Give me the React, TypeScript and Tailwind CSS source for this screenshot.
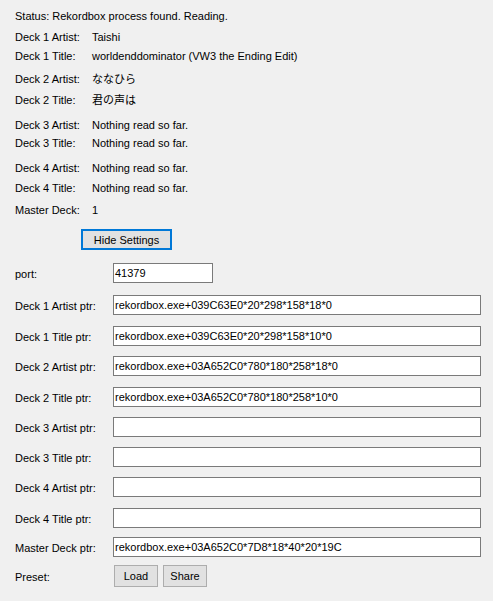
import React from "react";

const font = {
  fontFamily:
    '"Liberation Sans", "Noto Sans CJK JP", Arial, sans-serif',
};

type InfoRow = { label: string; value: string; mt: string };

const infoRows: InfoRow[] = [
  { label: "Deck 1 Artist:", value: "Taishi", mt: "mt-[5px]" },
  { label: "Deck 1 Title:", value: "worldenddominator (VW3 the Ending Edit)", mt: "mt-[3px]" },
  { label: "Deck 2 Artist:", value: "ななひら", mt: "mt-[7px]" },
  { label: "Deck 2 Title:", value: "君の声は", mt: "mt-[5px]" },
  { label: "Deck 3 Artist:", value: "Nothing read so far.", mt: "mt-[9px]" },
  { label: "Deck 3 Title:", value: "Nothing read so far.", mt: "mt-[2px]" },
  { label: "Deck 4 Artist:", value: "Nothing read so far.", mt: "mt-[9px]" },
  { label: "Deck 4 Title:", value: "Nothing read so far.", mt: "mt-[4px]" },
  { label: "Master Deck:", value: "1", mt: "mt-[6px]" },
];

type PtrRow = { label: string; value: string; mt: string };

const ptrRows: PtrRow[] = [
  { label: "Deck 1 Artist ptr:", value: "rekordbox.exe+039C63E0*20*298*158*18*0", mt: "mt-[12px]" },
  { label: "Deck 1 Title ptr:", value: "rekordbox.exe+039C63E0*20*298*158*10*0", mt: "mt-[11px]" },
  { label: "Deck 2 Artist ptr:", value: "rekordbox.exe+03A652C0*780*180*258*18*0", mt: "mt-[10px]" },
  { label: "Deck 2 Title ptr:", value: "rekordbox.exe+03A652C0*780*180*258*10*0", mt: "mt-[11px]" },
  { label: "Deck 3 Artist ptr:", value: "", mt: "mt-[10px]" },
  { label: "Deck 3 Title ptr:", value: "", mt: "mt-[10px]" },
  { label: "Deck 4 Artist ptr:", value: "", mt: "mt-[10px]" },
  { label: "Deck 4 Title ptr:", value: "", mt: "mt-[11px]" },
  { label: "Master Deck ptr:", value: "rekordbox.exe+03A652C0*7D8*18*40*20*19C", mt: "mt-[9px]" },
];

function TextBox({ value, width }: { value: string; width: string }) {
  return (
    <div
      className={`${width} h-[20px] border border-[#7a7a7a] bg-white pl-[1px] flex items-center text-[11px] leading-[14px] text-black whitespace-nowrap overflow-hidden`}
    >
      {value}
    </div>
  );
}

export default function App() {
  return (
    <div
      className="w-[493px] h-[601px] bg-[#f0f0f0] text-black text-[11px] overflow-hidden"
      style={font}
    >
      <div className="pl-[15px] pt-[8px]">
        <div className="h-[16px] leading-[16px]">Status: Rekordbox process found. Reading.</div>
        {infoRows.map((r) => (
          <div key={r.label} className={`${r.mt} h-[16px] leading-[16px] flex`}>
            <div className="w-[77px] shrink-0">{r.label}</div>
            <div className="whitespace-nowrap">{r.value}</div>
          </div>
        ))}
      </div>

      <div className="mt-[11px] pl-[81px]">
        <div className="w-[91px] h-[21px] border-2 border-[#0078d7] bg-[#e1e1e1] flex items-center justify-center leading-[14px]">
          Hide Settings
        </div>
      </div>

      <div className="pl-[15px]">
        <div className="mt-[13px] flex items-center h-[20px]">
          <div className="w-[98px] shrink-0 pt-[2px]">port:</div>
          <TextBox value="41379" width="w-[100px]" />
        </div>
        {ptrRows.map((r) => (
          <div key={r.label} className={`${r.mt} flex items-center h-[20px]`}>
            <div className="w-[98px] shrink-0 pt-[2px]">{r.label}</div>
            <TextBox value={r.value} width="w-[368px]" />
          </div>
        ))}
        <div className="mt-[8px] flex items-center h-[22px]">
          <div className="w-[99px] shrink-0 pt-[3px]">Preset:</div>
          <div className="flex gap-[5px]">
            <div className="w-[44px] h-[22px] border border-[#adadad] bg-[#e1e1e1] flex items-center justify-center">
              Load
            </div>
            <div className="w-[44px] h-[22px] border border-[#adadad] bg-[#e1e1e1] flex items-center justify-center">
              Share
            </div>
          </div>
        </div>
      </div>
    </div>
  );
}
